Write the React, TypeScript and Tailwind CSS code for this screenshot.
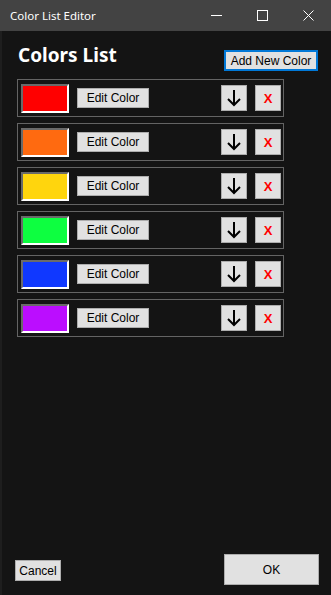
const colors = ["#ff0000", "#ff6a10", "#ffd50d", "#0dff40", "#1038ff", "#bb0dff"];

const btnFont = { fontFamily: '"Liberation Sans", Arial, sans-serif' };

function TitleBar() {
  return (
    <div className="flex items-center h-[31px] bg-[#434343] text-white shrink-0">
      <div className="pl-[10px] text-[11.5px] flex-1">Color List Editor</div>
      <div className="flex items-center h-full">
        <div className="w-[46px] h-full flex items-center justify-center">
          <svg width="11" height="11" viewBox="0 0 11 11">
            <path d="M0 5.5 H11" stroke="#fff" strokeWidth="1" />
          </svg>
        </div>
        <div className="w-[46px] h-full flex items-center justify-center">
          <svg width="11" height="11" viewBox="0 0 11 11">
            <rect x="0.5" y="0.5" width="10" height="10" fill="none" stroke="#fff" strokeWidth="1" />
          </svg>
        </div>
        <div className="w-[46px] h-full flex items-center justify-center">
          <svg width="11" height="11" viewBox="0 0 11 11">
            <path d="M0.5 0.5 L10.5 10.5 M10.5 0.5 L0.5 10.5" stroke="#fff" strokeWidth="1" />
          </svg>
        </div>
      </div>
    </div>
  );
}

function ColorRow({ color }: { color: string }) {
  return (
    <div className="flex items-center h-[38px] w-[267px] border border-[#646464] pl-[3px]">
      <div
        className="w-[48px] h-[29px] border-2 border-t-[#6a6a6a] border-l-[#6a6a6a] border-b-white border-r-white"
        style={{ backgroundColor: color }}
      />
      <button
        className="ml-[8px] w-[72px] h-[20px] bg-[#e1e1e1] border border-[#adadad] text-[12px] text-black leading-none"
        style={btnFont}
      >
        Edit Color
      </button>
      <button className="ml-auto w-[26px] h-[26px] bg-[#e1e1e1] border border-[#adadad] flex items-center justify-center">
        <svg width="16" height="18" viewBox="0 0 16 18">
          <path d="M8 1 V16 M2 10 L8 16 L14 10" fill="none" stroke="#000" strokeWidth="2" />
        </svg>
      </button>
      <button
        className="ml-[8px] mr-[2px] w-[26px] h-[26px] bg-[#e1e1e1] border border-[#adadad] flex items-center justify-center text-[#ff0000] text-[13px] font-bold leading-none"
        style={btnFont}
      >
        X
      </button>
    </div>
  );
}

export default function App() {
  return (
    <div
      className="w-[331px] h-[595px] flex flex-col bg-[#141414]"
      style={{ fontFamily: '"Noto Sans", "Open Sans", sans-serif' }}
    >
      <TitleBar />
      <div className="flex-1 flex flex-col border-l-2 border-[#1e1e1e]">
        <div className="flex items-start justify-between pl-[16px] pr-[13px] pt-[12px]">
          <div className="text-white text-[19px] font-bold leading-[25px]">Colors List</div>
          <button
            className="mt-[7px] w-[94px] h-[21px] bg-[#e1e1e1] border-2 border-[#0078d7] text-[12px] text-black leading-none"
            style={btnFont}
          >
            Add New Color
          </button>
        </div>
        <div className="flex flex-col gap-[6px] pl-[15px] mt-[8px]">
          {colors.map((c) => (
            <ColorRow key={c} color={c} />
          ))}
        </div>
        <div className="mt-auto flex items-end justify-between pl-[13px] pr-[12px] pb-[10px]">
          <button
            className="mb-[4px] w-[46px] h-[21px] bg-[#e1e1e1] border border-[#adadad] text-[12px] text-black leading-none"
            style={btnFont}
          >
            Cancel
          </button>
          <button
            className="w-[95px] h-[31px] bg-[#e1e1e1] border border-[#adadad] text-[12px] text-black"
            style={btnFont}
          >
            OK
          </button>
        </div>
      </div>
    </div>
  );
}
